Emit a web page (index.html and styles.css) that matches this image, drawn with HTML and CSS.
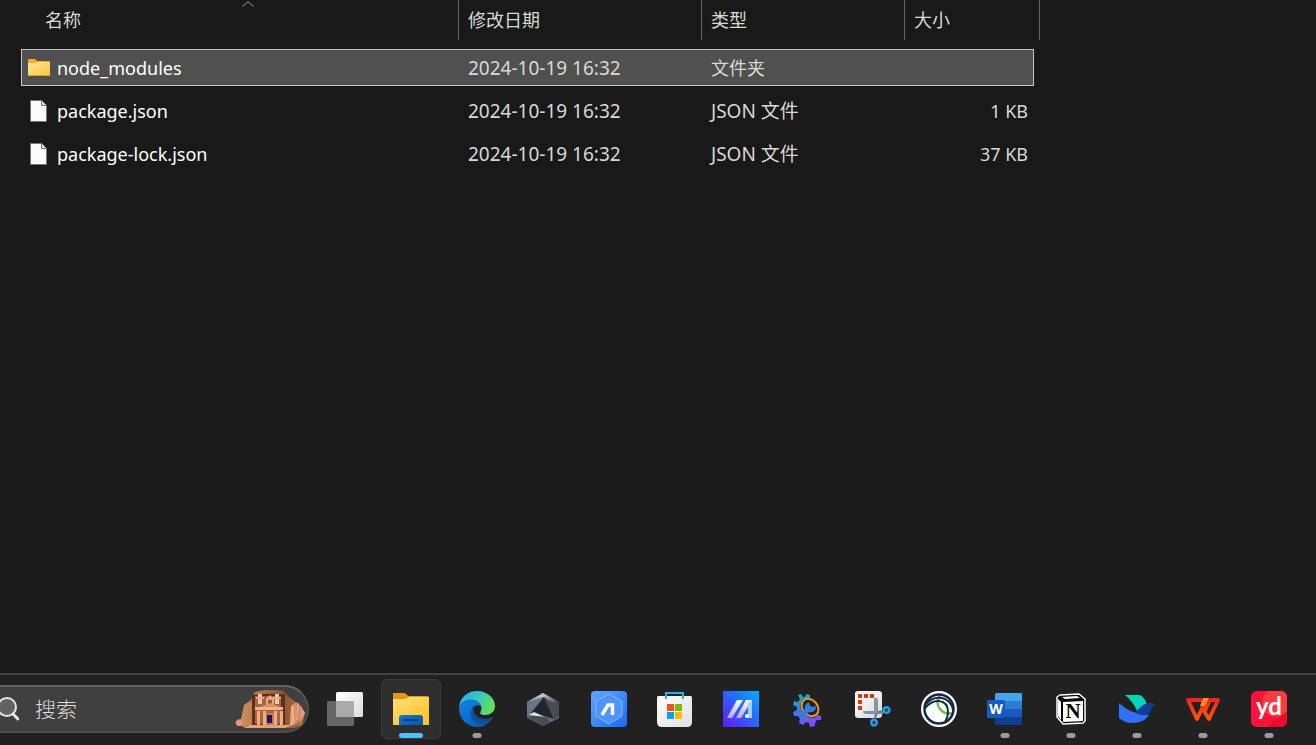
FILE: index.html
```html
<!DOCTYPE html>
<html lang="zh-CN">
<head>
<meta charset="utf-8">
<meta name="viewport" content="width=device-width, initial-scale=1">
<title>文件资源管理器</title>
<link rel="stylesheet" href="styles.css">
</head>
<body>
<main class="explorer">
  <table class="files">
    <colgroup>
      <col class="col-name"><col class="col-date"><col class="col-type"><col class="col-size"><col class="col-edge">
    </colgroup>
    <thead>
      <tr>
        <th scope="col" aria-sort="ascending"><button class="heading heading-name" type="button">名称<svg class="sort" width="12" height="6" viewBox="0 0 12 6" aria-hidden="true"><path d="M.5 5.500 6 .7l5.500 4.800" fill="none" stroke="#a0a0a0"/></svg></button></th>
        <th scope="col"><button class="heading" type="button">修改日期</button></th>
        <th scope="col"><button class="heading" type="button">类型</button></th>
        <th scope="col" colspan="2"><button class="heading" type="button">大小</button></th>
      </tr>
    </thead>
    <tbody>
      <tr class="selected">
        <td><span class="name"><svg width="22" height="20" viewBox="0 0 22 20" aria-hidden="true"><defs><linearGradient id="fold" x2="1" y2="1"><stop stop-color="#ffe59b"/><stop offset="1" stop-color="#ffc83d"/></linearGradient></defs><path d="M0 3q0-2 1-2h6l2 2h12q1 0 1 1v5H0z" fill="#f5b01c"/><path d="M0 5h8l1-1h13v13H0z" fill="url(#fold)"/><path d="M0 17h22v1H0z" fill="#dca01c"/></svg>node_modules</span></td>
        <td class="meta">2024-10-19 16:32</td>
        <td class="meta kind-cjk">文件夹</td>
        <td class="size"></td>
      </tr>
      <tr>
        <td><span class="name"><svg width="22" height="22" viewBox="0 0 22 22" aria-hidden="true"><path d="M2.500.5h11l5 5v16h-16z" fill="#fafafa" stroke="#777"/><path d="M13.500.5v5h5" fill="#ddd" stroke="#777"/></svg>package.json</span></td>
        <td class="meta">2024-10-19 16:32</td>
        <td class="meta">JSON 文件</td>
        <td class="size">1 KB</td>
      </tr>
      <tr>
        <td><span class="name"><svg width="22" height="22" viewBox="0 0 22 22" aria-hidden="true"><path d="M2.500.5h11l5 5v16h-16z" fill="#fafafa" stroke="#777"/><path d="M13.500.5v5h5" fill="#ddd" stroke="#777"/></svg>package-lock.json</span></td>
        <td class="meta">2024-10-19 16:32</td>
        <td class="meta">JSON 文件</td>
        <td class="size">37 KB</td>
      </tr>
    </tbody>
  </table>
</main>
<footer class="taskbar">
  <label class="search">
    <svg width="19" height="24" viewBox="0 0 19 24" aria-hidden="true"><circle cx="7" cy="10" r="9" fill="#626262" stroke="#e4e6ea" stroke-width="2"/><path d="m13 17 5 5" stroke="#e4e6ea" stroke-width="3" stroke-linecap="round"/></svg>
    <input class="search-input" type="text" placeholder="搜索" aria-label="搜索">
    <svg class="petra" width="70" height="38" viewBox="0 0 70 38" aria-hidden="true">
      <defs><linearGradient id="rock" x2="1"><stop stop-color="#d39668"/><stop offset=".3" stop-color="#bc7a4c"/><stop offset=".7" stop-color="#935330"/><stop offset="1" stop-color="#b9784d"/></linearGradient><linearGradient id="pink" x2="1"><stop stop-color="#eeb795"/><stop offset=".5" stop-color="#cb835d"/><stop offset="1" stop-color="#eda77f"/></linearGradient></defs>
      <path d="M5 35 0 33q2-4 6-4l3-14 7-5 4-8 10-2q14 0 18 1l6 6 9 7 7 9-3 12-16 6H16z" fill="url(#rock)"/>
      <path d="M17 5q13-2 33-1v31H17z" fill="#58301f"/><path d="M20 6h26v28H20z" fill="#a8633f"/>
      <path d="M23 4h4v10h-4zm17 0h4v10h-4z" fill="#f2c6aa"/><path d="M21 7h8v2h-8zm17 0h8v2h-8zM31 9l4-4 4 4v7h-8z" fill="#e5a883"/><path d="M33 10h4v5h-4z" fill="#955337"/>
      <path d="M20 17h28v3H20z" fill="#f0b38a"/><path d="M25 17 35 13l10 4z" fill="#d5936c"/>
      <path d="M22 21h3v14h-3zm6 0h3v14h-3zm11 0h3v14h-3zm6 0h3v14h-3z" fill="#ebac86"/>
      <path d="M31 23h8v12h-8z" fill="#c47952"/><path d="M32 25h5v8h-5z" fill="#20165b"/>
      <path d="m56 17 5-5 5 4 4 7-4 8-8 4h-3z" fill="url(#pink)"/><path d="m57 15 2 18M63 13l-1 17" stroke="#f2b892"/>
      <path d="M15 35h43l-8 3H10z" fill="#e6a075"/><circle cx="4" cy="33" r="3" fill="#e99780"/>
    </svg>
  </label>
  <nav class="apps" aria-label="任务栏">
    <button class="app" type="button" aria-label="任务视图"><svg viewBox="0 0 36 36"><defs><linearGradient id="tv" x2="1" y2="1"><stop stop-color="#fff"/><stop offset="1" stop-color="#dcdcdc"/></linearGradient></defs><rect y="10" width="27" height="25" rx="1.500" fill="#666"/><rect x="9" y="1" width="27" height="25" rx="1.500" fill="url(#tv)"/><path d="M9 10h18v16H9z" fill="#aaa"/></svg></button>
    <button class="app active" type="button" aria-label="文件资源管理器"><svg viewBox="0 0 36 36"><defs><linearGradient id="ef" x2=".7" y2="1"><stop stop-color="#ffde7c"/><stop offset="1" stop-color="#ffc425"/></linearGradient><linearGradient id="eb" x2="1" y2="1"><stop stop-color="#0f77cd"/><stop offset="1" stop-color="#0a56a5"/></linearGradient></defs><path d="M0 2h11q2 0 4 3h20l1 2v10H0z" fill="#e09a08"/><path d="M0 8h12l4-2h20v28H0z" fill="url(#ef)"/><path d="M6 34v-7q0-3 3-3h18q3 0 3 3v7z" fill="url(#eb)"/><path d="M11 29h14" stroke="#064383" stroke-width="2" stroke-linecap="round"/></svg><span class="dot"></span></button>
    <button class="app running" type="button" aria-label="Edge"><svg viewBox="0 0 36 36"><defs><linearGradient id="eg" x1="0" y1=".3" x2="1" y2=".6"><stop stop-color="#2aaee8"/><stop offset=".5" stop-color="#35c9bf"/><stop offset="1" stop-color="#67e34d"/></linearGradient><linearGradient id="ed" x1="0" y1="0" x2=".6" y2="1"><stop stop-color="#1583db"/><stop offset=".6" stop-color="#0a6fd2"/><stop offset="1" stop-color="#0b5fb6"/></linearGradient></defs><path d="M0 16C1 6 9 0 18 0c10 0 18 7 18 15 0 6-5 9-10 9-4 0-6-1-4-4 2-5-2-10-8-11C8 8 3 11 0 16z" fill="url(#eg)"/><path d="M0 17C2 11 7 8 12 9c5 0 9 3 10 6-5-2-9 1-9 6 0 7 8 12 17 10-3 3-7 5-12 5C8 36 0 28 0 17z" fill="url(#ed)"/><path d="M16 14c-3 2-5 6-4 10 1 7 8 11 15 9 3-1 6-4 7-7-8 4-17 1-19-5-1-3 0-5 1-7z" fill="#114d99"/></svg><span class="dot"></span></button>
    <button class="app" type="button" aria-label="Armoury Crate"><svg viewBox="0 0 36 36"><defs><linearGradient id="hx" x2="1" y2="1"><stop stop-color="#8793a0"/><stop offset=".5" stop-color="#4c545d"/><stop offset="1" stop-color="#747b84"/></linearGradient><linearGradient id="ht" x2="1" y2=".3"><stop stop-color="#7c8994"/><stop offset=".5" stop-color="#c3c8cd"/><stop offset="1" stop-color="#4a5159"/></linearGradient></defs><path d="m18 2 16 9v16l-16 8-16-8V11z" fill="url(#hx)"/><path d="m18 2 16 9-6 6-9-11L2 11z" fill="url(#ht)"/><path d="M19 6 6 24l-4 2V11z" fill="#687683"/><path d="M19 6 29 28 20 25 6 22z" fill="#22262b"/><path d="m19 6 9 6 6-1v14l-5 4z" fill="#454c54"/><path d="m4 24 16 2-11-5z" fill="#e0e4e8"/><path d="m4 25 17 1 4 5-7 4z" fill="#484e56"/></svg></button>
    <button class="app" type="button" aria-label="AI 助手"><svg viewBox="0 0 36 36"><defs><linearGradient id="ai" x2="1" y2="1"><stop stop-color="#62a9ff"/><stop offset="1" stop-color="#176afa"/></linearGradient></defs><rect width="36" height="36" rx="4" fill="url(#ai)"/><path d="m18 3 13 7v15l-13 8-13-8V10z" fill="#4d94ff" stroke="#8abaff"/><path d="m11 24 6-10h4.500v10" fill="none" stroke="#fff" stroke-width="3.500"/></svg></button>
    <button class="app" type="button" aria-label="Microsoft Store"><svg viewBox="0 0 36 36"><defs><linearGradient id="st" x2="1" y2="1"><stop stop-color="#fff"/><stop offset="1" stop-color="#dedede"/></linearGradient></defs><path d="M1 5h33l1 1v25q0 5-5 5H5q-5 0-5-5V6z" fill="url(#st)"/><path d="M9 8V2h17v6" fill="none" stroke="#27b4df" stroke-width="2"/><path d="M10 13h7v7h-7z" fill="#f25022"/><path d="M18 13h7v7h-7z" fill="#7fba00"/><path d="M10 21h7v7h-7z" fill="#00a4ef"/><path d="M18 21h7v7h-7z" fill="#ffb900"/></svg></button>
    <button class="app" type="button" aria-label="MyASUS"><svg viewBox="0 0 36 36"><defs><linearGradient id="ma" x1="0" y1="1" x2="1" y2="0"><stop stop-color="#6319ff"/><stop offset=".5" stop-color="#2d61ff"/><stop offset="1" stop-color="#00adff"/></linearGradient><linearGradient id="mw" x2="0" y2="1"><stop stop-color="#fff"/><stop offset="1" stop-color="#b7a5ff"/></linearGradient></defs><path d="M0 0h36v36H0z" fill="url(#ma)"/><path d="M4 27h5L20 9h-6zM13 27h5L29 9h-6z" fill="url(#mw)"/><path d="M25 12 29 9v18h-4z" fill="#a8cfff"/><circle cx="24" cy="25" r="2" fill="#fff"/></svg></button>
    <button class="app" type="button" aria-label="维护工具"><svg viewBox="0 0 36 36"><defs><linearGradient id="gr" gradientUnits="userSpaceOnUse" x1="12" y1="4" x2="24" y2="32"><stop stop-color="#09b6b2"/><stop offset=".5" stop-color="#3c78ee"/><stop offset="1" stop-color="#7950fa"/></linearGradient></defs><path d="M9 5l3-1 2 3h2l1-3 4 1v3l-8 2-2 6 2 6 6 5 6 1 4-3 3 1 0 4-4 0-2 3 0 3-5 1-1-4-3-1-3 3-4-2 1-4-2-3-4 0-1-4 4-2 0-3-4-2 1-4 4 1 2-3z" transform="translate(0 -1)" fill="url(#gr)"/><ellipse cx="21" cy="16.500" rx="9.500" ry="7.500" transform="rotate(48 21 16.500)" fill="#212427" stroke="#f0941f" stroke-width="2"/><path d="m10 24 6-6q-1-5 4-7l1 4 3 1 3-1q0 7-7 6l-6 6z" fill="#317be1"/></svg></button>
    <button class="app" type="button" aria-label="截图工具"><svg viewBox="0 0 36 36"><defs><linearGradient id="sn" x2="1" y2="1"><stop stop-color="#fff"/><stop offset="1" stop-color="#d5d8dc"/></linearGradient></defs><rect width="27" height="27" rx="3" fill="url(#sn)"/><path d="M3 3h4v4H3zm6 0h4v4H9zm6 0h4v4h-4zM3 9h4v4H3zm0 6h4v4H3z" fill="#d83b01"/><path d="M19 7q4-1 4 2v12l-3 5-1-3zM8 20h20v3H11q-3 0-3-3z" fill="#8b929b"/><path d="m22 22-2 5M23 21l5-1" stroke="#6e7782" stroke-width="2"/><ellipse cx="31.500" cy="19" rx="3" ry="2.800" fill="#213442" stroke="#239de3" stroke-width="2.500"/><ellipse cx="19" cy="31.500" rx="2.800" ry="3" fill="#213442" stroke="#239de3" stroke-width="2.500"/></svg></button>
    <button class="app" type="button" aria-label="网络工具"><svg viewBox="0 0 36 36"><circle cx="18" cy="18" r="18" fill="#fff"/><path d="M19 4q-5 8 0 14t12 4" fill="none" stroke="#6cc04a" stroke-width="2.500"/><circle cx="18" cy="18" r="14.500" fill="none" stroke="#14284b" stroke-width="2.500"/><path d="M4 17Q11 9 18 10q9 1 9 11 0 5-3 10M5 13Q13 4 24 8q7 4 8 11" fill="none" stroke="#14284b" stroke-width="2"/></svg></button>
    <button class="app running" type="button" aria-label="Word"><svg viewBox="0 0 36 36"><path d="M9 2h25q1 0 1 1v7H8V3z" fill="#41a5ee"/><path d="M8 10h27v8H8z" fill="#2b7cd3"/><path d="M8 18h27v8H8z" fill="#185abd"/><path d="M8 26h27v7l-1 1H9l-1-1z" fill="#103f91"/><rect y="9" width="18" height="18" rx="1.500" fill="#185abd"/><text class="word-mark" x="9" y="23">W</text></svg><span class="dot"></span></button>
    <button class="app running" type="button" aria-label="Notion"><svg viewBox="0 0 36 36"><path d="m4 6 3-2 19-1 6 5v22l-2 2-20 1-6-7z" fill="#080808" stroke="#fff" stroke-width="1.500" stroke-linejoin="round"/><path d="m5 6 20-2 5 4-20 1z" fill="#080808"/><path d="m10 11 20-1v20l-20 1z" fill="#fff"/><path d="m5 8 3 3v18l-3-4z" fill="#fff"/><path d="m9 6 15-1 3 2-15 1z" fill="#fff"/><text class="notion-mark" x="20" y="27">N</text></svg><span class="dot"></span></button>
    <button class="app running" type="button" aria-label="飞书"><svg viewBox="0 0 36 36"><path d="M6 4h14q4 0 8 9l-9 9Q14 10 6 4z" fill="#00d6b9"/><path d="M0 12q12 11 25 11l5 1q-5 8-17 8-7 0-13-5z" fill="#3370ff"/><path d="M16 22q8-10 14-10l6 1q-3 3-5 8-3 6-15 1z" fill="#133c9a"/></svg><span class="dot"></span></button>
    <button class="app running" type="button" aria-label="WPS Office"><svg viewBox="0 0 36 36"><defs><linearGradient id="wp" gradientUnits="userSpaceOnUse" x1="0" y1="7" x2="0" y2="30"><stop stop-color="#f2201d"/><stop offset="1" stop-color="#ff5b0a"/></linearGradient></defs><path d="M17 9H3l9 19 9-19M17 17l7 11 9-19h-8l-5 11" fill="none" stroke="url(#wp)" stroke-width="3.800" stroke-linejoin="round"/><path d="M18 7h6l-4 8h-5z" fill="#ff8a26"/></svg><span class="dot"></span></button>
    <button class="app running" type="button" aria-label="有道词典"><svg viewBox="0 0 36 36"><defs><clipPath id="yc"><rect width="36" height="36" rx="6"/></clipPath></defs><g clip-path="url(#yc)"><path d="M0 0h36v36H0z" fill="#fd1238"/><circle cx="25" cy="12" r="14" fill="#ff3940"/><path d="m16 36 20-16v16z" fill="#e90e30"/></g><text class="yd-mark" x="18" y="24">yd</text></svg><span class="dot"></span></button>
  </nav>
</footer>
</body>
</html>
```

FILE: styles.css
```css
* { box-sizing: border-box; }

body {
  margin: 0;
  min-height: 100vh;
  display: flex;
  flex-direction: column;
  overflow: hidden;
  background: #191919;
  color: #fff;
  font-family: "Noto Sans", "Noto Sans CJK SC", sans-serif;
  font-size: 18px;
}

button, input { font: inherit; color: inherit; }

.explorer { flex: 1; padding-left: 21px; }

.files {
  table-layout: fixed;
  width: 1019px;
  margin-top: -6px;
  border-spacing: 0 6px;
  line-height: 24px;
}
.col-name { width: 438px; }
.col-date { width: 243px; }
.col-type { width: 203px; }
.col-size { width: 129px; }
.col-edge { width: 6px; }

th { height: 43px; padding: 0; vertical-align: top; font-weight: 400; }
td { height: 37px; padding: 0 0 0 9px; border: 1px solid transparent; border-width: 1px 0; }
td:first-child { padding-left: 7px; }

.heading {
  position: relative;
  display: block;
  width: 100%;
  height: 40px;
  padding: 0 9px 2px;
  border: 0;
  border-right: 1px solid #636363;
  background: none;
  color: #d8d8d8;
  font-family: "Noto Sans CJK SC", sans-serif;
  text-align: left;
}
.heading-name { padding-left: 24px; }
.sort { position: absolute; top: 1px; left: 221px; }

.name { display: flex; align-items: center; gap: 7px; }
.meta { font-size: 19px; color: #d8d8d8; }
.kind-cjk { font-size: 18px; }
.size { padding-right: 6px; color: #d8d8d8; text-align: right; }

.selected td { background: #505050; border-color: #c4c4c4; }
.selected td:first-child { padding-left: 6px; border-left: 1px solid #c4c4c4; }
.selected td:last-child { border-right: 1px solid #c4c4c4; }

.taskbar {
  display: flex;
  align-items: center;
  gap: 6px;
  padding: 4px 0 6px;
  border-top: 2px solid #424242;
  background: #212121;
}

.search {
  flex: none;
  width: 309px;
  display: flex;
  align-items: center;
  height: 48px;
  padding-right: 2px;
  border: solid #505050;
  border-width: 2px 2px 2px 0;
  border-top-color: #626262;
  border-radius: 0 24px 24px 0;
  background: #404040;
}
.search-input {
  flex: 1;
  width: 0;
  min-width: 0;
  padding: 0 0 2px 16px;
  border: 0;
  outline: 0;
  background: none;
  font-family: "Noto Sans CJK SC", sans-serif;
  font-size: 21px;
  font-weight: 300;
}
.search-input::placeholder { color: #dcdcdc; opacity: 1; }
.petra { flex: none; }

.apps { display: flex; gap: 6px; }
.app {
  position: relative;
  display: grid;
  place-items: center;
  flex: none;
  width: 60px;
  height: 60px;
  padding: 0;
  border: 1px solid transparent;
  border-radius: 6px;
  background: none;
}
.app svg { width: 36px; height: 36px; }
.active { background: #2e2e2e; border-color: #3a3a3a; }

.dot {
  position: absolute;
  bottom: 0;
  left: 50%;
  width: 9px;
  height: 5px;
  border-radius: 3px;
  background: #9b9b9b;
  transform: translateX(-50%);
}
.active .dot { width: 24px; background: #4cc2ff; }

.word-mark, .notion-mark, .yd-mark { fill: #fff; text-anchor: middle; font-weight: 700; }
.word-mark { font-family: "Open Sans", sans-serif; font-size: 14px; }
.notion-mark { fill: #000; font-family: "Liberation Serif", serif; font-size: 21px; }
.yd-mark { font-family: Lato, sans-serif; font-size: 24px; }
```
